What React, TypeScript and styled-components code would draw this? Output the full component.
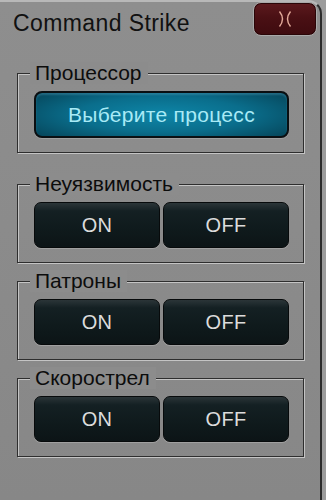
import React from "react";
import styled, { createGlobalStyle } from "styled-components";

const GlobalStyle = createGlobalStyle`
  html, body {
    margin: 0;
    padding: 0;
    background: #9a9a9a;
  }
  body {
    font-family: "Liberation Sans", Arial, sans-serif;
  }
`;

const Screen = styled.div`
  width: 326px;
  height: 500px;
  background: #9c9c9c;
  overflow: hidden;
`;

const Window = styled.div`
  box-sizing: border-box;
  width: 322px;
  height: 500px;
  background: linear-gradient(180deg, #8e8e8e 0%, #8a8a8a 60%, #878787 100%);
  border-top: 2px solid #b8b8b8;
  border-right: 2px solid #2c2c2c;
  border-top-right-radius: 14px;
  padding: 0 16px 0 17px;
`;

const TitleBar = styled.div`
  display: flex;
  align-items: flex-start;
  justify-content: space-between;
  height: 60px;
  margin-left: -4px;
  margin-right: -13px;
`;

const Title = styled.h1`
  margin: 8px 0 0;
  font-size: 23px;
  font-weight: normal;
  color: #111;
  letter-spacing: 0.4px;
`;

const CloseButton = styled.button`
  width: 64px;
  height: 34px;
  margin-top: 0;
  padding: 0;
  border: 1px solid #a9a9a9;
  border-radius: 8px;
  background: linear-gradient(180deg, #5c1a1e 0%, #4a1014 45%, #3e0b0f 100%);
  box-shadow: inset 0 0 0 1px #2a0608;
  display: flex;
  align-items: center;
  justify-content: center;
`;

const Group = styled.fieldset<{ $extra?: boolean }>`
  margin: 0 0 ${(p) => (p.$extra ? "20px" : "7px")};
  padding: 7px 14px 14px 16px;
  border: 1px solid #2e2e2e;
  box-shadow: inset 1px 1px 0 #c4c4c4, 1px 1px 0 #c4c4c4;
  min-width: 0;
`;

const Legend = styled.legend`
  margin-left: -4px;
  padding: 0 6px 0 5px;
  font-size: 21px;
  line-height: 22px;
  color: #0c0c0c;
  background: #8c8c8c;
`;

const Row = styled.div`
  display: grid;
  grid-template-columns: 1fr 1fr;
  gap: 3px;
`;

const DarkButton = styled.button`
  height: 46px;
  padding: 0;
  border: 1px solid #070a0b;
  border-radius: 7px;
  background: linear-gradient(180deg, #2b3538 0%, #142023 18%, #0f1a1c 60%, #0c1416 100%);
  box-shadow: 0 1px 0 #a0a0a0;
  color: #dcdcdc;
  font-family: "Liberation Sans", Arial, sans-serif;
  font-size: 20px;
  letter-spacing: 0.3px;
`;

const ProcessButton = styled.button`
  width: 100%;
  height: 47px;
  padding: 0;
  border: 2px solid #0a0f12;
  border-radius: 8px;
  background: radial-gradient(ellipse 75% 90% at 50% 50%, #0e86a8 0%, #0a6e8c 45%, #06475c 85%, #043444 100%);
  box-shadow: inset 0 2px 2px rgba(120, 200, 230, 0.25), 0 1px 0 #a0a0a0;
  color: #a8eaf6;
  font-family: "Liberation Sans", Arial, sans-serif;
  font-size: 21px;
  letter-spacing: 0.3px;
`;

const CloseIcon = () => (
  <svg width="18" height="18" viewBox="0 0 18 18" fill="none">
    <path d="M3.5 1.5 Q9.5 9 3.5 16.5" stroke="#e2a898" strokeWidth="1.4" />
    <path d="M14.5 1.5 Q8.5 9 14.5 16.5" stroke="#e2a898" strokeWidth="1.4" />
  </svg>
);

const toggles = ["Неуязвимость", "Патроны", "Скорострел"];

const App: React.FC = () => {
  return (
    <Screen>
      <GlobalStyle />
      <Window>
        <TitleBar>
          <Title>Command Strike</Title>
          <CloseButton aria-label="close">
            <CloseIcon />
          </CloseButton>
        </TitleBar>

        <Group $extra>
          <Legend>Процессор</Legend>
          <ProcessButton>Выберите процесс</ProcessButton>
        </Group>

        {toggles.map((name) => (
          <Group key={name}>
            <Legend>{name}</Legend>
            <Row>
              <DarkButton>ON</DarkButton>
              <DarkButton>OFF</DarkButton>
            </Row>
          </Group>
        ))}
      </Window>
    </Screen>
  );
};

export default App;
